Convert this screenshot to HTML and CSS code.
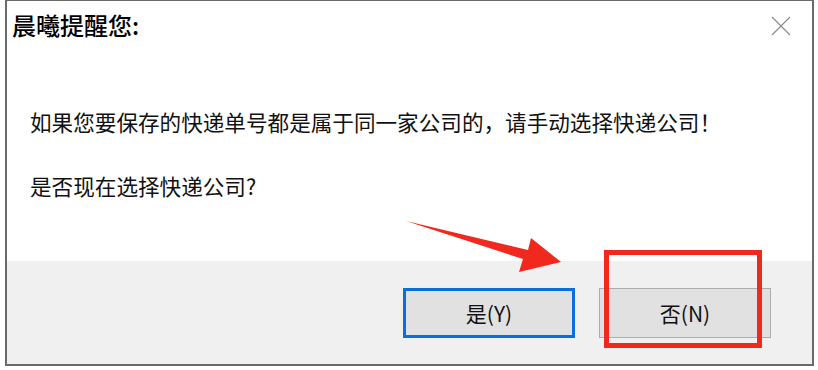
FILE: index.html
```html
<!DOCTYPE html>
<html lang="zh-CN">
<head>
<meta charset="utf-8">
<link rel="stylesheet" href="styles.css">
</head>
<body>
<div class="window">
  <div class="titlebar">
    <span class="title">晨曦提醒您:</span>
    <svg class="close" width="20" height="20" viewBox="0 0 20 20"><path d="M1 1L19 19M19 1L1 19" stroke="#8a8a8a" stroke-width="1.1" fill="none"/></svg>
  </div>
  <div class="content">
    <p class="msg">如果您要保存的快递单号都是属于同一家公司的，请手动选择快递公司！</p>
    <p class="msg">是否现在选择快递公司?</p>
  </div>
  <div class="footer">
    <div class="btn btn-default">是(Y)</div>
    <div class="btn">否(N)</div>
  </div>
</div>
<svg class="annot" width="818" height="370" viewBox="0 0 818 370">
  <polygon points="406,221 528,250 531,238 561,262 519,272 523,259" fill="#f0281e"/>
  <rect x="606.5" y="252.5" width="153" height="93" fill="none" stroke="#f0281e" stroke-width="5"/>
</svg>
</body>
</html>
```
FILE: styles.css
```css
html, body {
  margin: 0;
  padding: 0;
  background: #ffffff;
}
body {
  width: 818px;
  height: 370px;
  position: relative;
  overflow: hidden;
  font-family: "Noto Sans CJK SC", "Noto Sans", sans-serif;
  color: #111;
}
.window {
  margin-left: 5px;
  width: 805px;
  height: 363px;
  border: 2px solid #6a6a6a;
  border-top-width: 1px;
  background: #fff;
  display: flex;
  flex-direction: column;
}
.titlebar {
  height: 55px;
  display: flex;
  align-items: center;
  justify-content: space-between;
  padding: 0 21px 0 5px;
}
.title {
  font-size: 24px;
  font-weight: 500;
  color: #000;
  margin-top: -8px;
}
.close {
  margin-top: -5px;
}
.content {
  flex: 1;
  padding: 52px 0 0 23px;
}
.msg {
  margin: 0 0 36px 0;
  font-size: 21.6px;
  line-height: 28px;
  color: #111;
}
.footer {
  height: 103px;
  background: #f0f0f0;
  display: flex;
  justify-content: flex-end;
  align-items: flex-start;
  gap: 24px;
  padding: 27px 41px 0 0;
  box-sizing: border-box;
}
.btn {
  width: 172px;
  height: 50px;
  box-sizing: border-box;
  border: 1px solid #adadad;
  background: #e1e1e1;
  display: flex;
  align-items: center;
  justify-content: center;
  font-size: 21px;
  color: #111;
}
.btn-default {
  border: 3px solid #0a6fdc;
}
.annot {
  position: absolute;
  left: 0;
  top: 0;
  pointer-events: none;
}
```
